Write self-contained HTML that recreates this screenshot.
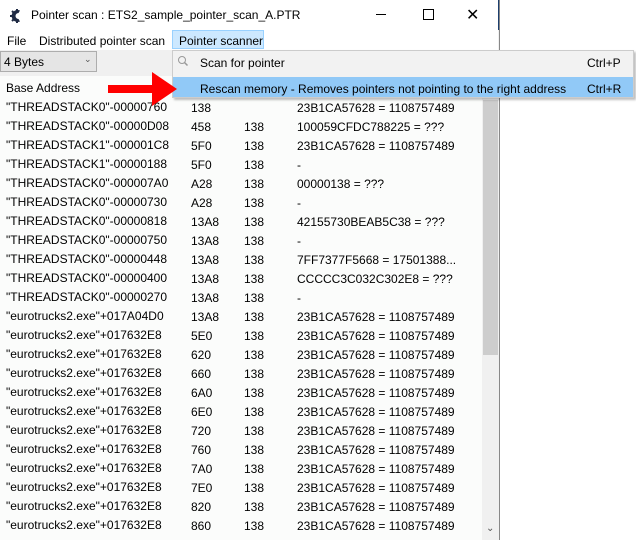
<html><head><style>
body{margin:0;width:636px;height:540px;background:#fff;font-family:"Liberation Sans",sans-serif;font-size:12px;color:#000;position:relative;overflow:hidden}
.a{position:absolute;white-space:nowrap}
.win{position:absolute;left:0;top:0;width:499px;height:540px;border-right:1px solid #888;background:#f0f0f0}
.title{position:absolute;left:0;top:0;width:498px;height:30px;background:#fff;border-right:1px solid #1c3f6e}
.row{position:absolute;left:6px;height:19px;line-height:19px}
</style></head><body>
<div class="win"></div>
<div class="title"></div>
<svg class="a" style="left:9px;top:8px" width="16" height="16" viewBox="0 0 16 16"><path d="M11 2.5A6 6 0 1 0 11 13.5L9.5 11A3 3 0 1 1 9.5 5z" fill="#1f2a44"/><path d="M3 3l2 2M1 8h3M3 13l2-2M8 1v3M8 12v3" stroke="#1f2a44" stroke-width="2"/></svg>
<div class="a" style="left:31px;top:8px;font-size:12px">Pointer scan : ETS2_sample_pointer_scan_A.PTR</div>
<div class="a" style="left:376px;top:14px;width:10px;height:1px;background:#000"></div>
<div class="a" style="left:423px;top:9px;width:9px;height:9px;border:1px solid #000"></div>
<div class="a" style="left:466px;top:5px;font-size:16px">✕</div>
<div class="a" style="left:0;top:30px;width:498px;height:20px;background:#fff"></div>
<div class="a" style="left:7px;top:34px">File</div>
<div class="a" style="left:39px;top:34px">Distributed pointer scan</div>
<div class="a" style="left:172px;top:30px;width:92px;height:19px;background:#cce8ff;border:1px solid #99d1ff;box-sizing:border-box"></div>
<div class="a" style="left:179px;top:34px">Pointer scanner</div>
<div class="a" style="left:0;top:51px;width:97px;height:21px;background:#e5e5e5;border:1px solid #adadad;box-sizing:border-box"></div>
<div class="a" style="left:4px;top:55px">4 Bytes</div>
<div class="a" style="left:84px;top:54px;font-size:9px;color:#555">⌄</div>
<div class="a" style="left:0;top:76px;width:482px;height:464px;background:#fbfcfb"></div>
<div class="a" style="left:482px;top:76px;width:16px;height:464px;background:#f0f0f0"></div>
<div class="a" style="left:483px;top:100px;width:15px;height:255px;background:#cdcdcd"></div>
<div class="a" style="left:486px;top:523px;font-size:10px;color:#555">⌄</div>
<div class="a" style="left:6px;top:81px">Base Address</div>
<div class="row a" style="top:98px">"THREADSTACK0"-00000760</div><div class="a" style="left:191px;top:101px">138</div><div class="a" style="left:297px;top:101px">23B1CA57628 = 1108757489</div>
<div class="row a" style="top:117px">"THREADSTACK0"-00000D08</div><div class="a" style="left:191px;top:120px">458</div><div class="a" style="left:244px;top:120px">138</div><div class="a" style="left:297px;top:120px">100059CFDC788225 = ???</div>
<div class="row a" style="top:136px">"THREADSTACK1"-000001C8</div><div class="a" style="left:191px;top:139px">5F0</div><div class="a" style="left:244px;top:139px">138</div><div class="a" style="left:297px;top:139px">23B1CA57628 = 1108757489</div>
<div class="row a" style="top:155px">"THREADSTACK1"-00000188</div><div class="a" style="left:191px;top:158px">5F0</div><div class="a" style="left:244px;top:158px">138</div><div class="a" style="left:297px;top:158px">-</div>
<div class="row a" style="top:174px">"THREADSTACK0"-000007A0</div><div class="a" style="left:191px;top:177px">A28</div><div class="a" style="left:244px;top:177px">138</div><div class="a" style="left:297px;top:177px">00000138 = ???</div>
<div class="row a" style="top:193px">"THREADSTACK0"-00000730</div><div class="a" style="left:191px;top:196px">A28</div><div class="a" style="left:244px;top:196px">138</div><div class="a" style="left:297px;top:196px">-</div>
<div class="row a" style="top:212px">"THREADSTACK0"-00000818</div><div class="a" style="left:191px;top:215px">13A8</div><div class="a" style="left:244px;top:215px">138</div><div class="a" style="left:297px;top:215px">42155730BEAB5C38 = ???</div>
<div class="row a" style="top:231px">"THREADSTACK0"-00000750</div><div class="a" style="left:191px;top:234px">13A8</div><div class="a" style="left:244px;top:234px">138</div><div class="a" style="left:297px;top:234px">-</div>
<div class="row a" style="top:250px">"THREADSTACK0"-00000448</div><div class="a" style="left:191px;top:253px">13A8</div><div class="a" style="left:244px;top:253px">138</div><div class="a" style="left:297px;top:253px">7FF7377F5668 = 17501388...</div>
<div class="row a" style="top:269px">"THREADSTACK0"-00000400</div><div class="a" style="left:191px;top:272px">13A8</div><div class="a" style="left:244px;top:272px">138</div><div class="a" style="left:297px;top:272px">CCCCC3C032C302E8 = ???</div>
<div class="row a" style="top:288px">"THREADSTACK0"-00000270</div><div class="a" style="left:191px;top:291px">13A8</div><div class="a" style="left:244px;top:291px">138</div><div class="a" style="left:297px;top:291px">-</div>
<div class="row a" style="top:307px">"eurotrucks2.exe"+017A04D0</div><div class="a" style="left:191px;top:310px">13A8</div><div class="a" style="left:244px;top:310px">138</div><div class="a" style="left:297px;top:310px">23B1CA57628 = 1108757489</div>
<div class="row a" style="top:326px">"eurotrucks2.exe"+017632E8</div><div class="a" style="left:191px;top:329px">5E0</div><div class="a" style="left:244px;top:329px">138</div><div class="a" style="left:297px;top:329px">23B1CA57628 = 1108757489</div>
<div class="row a" style="top:345px">"eurotrucks2.exe"+017632E8</div><div class="a" style="left:191px;top:348px">620</div><div class="a" style="left:244px;top:348px">138</div><div class="a" style="left:297px;top:348px">23B1CA57628 = 1108757489</div>
<div class="row a" style="top:364px">"eurotrucks2.exe"+017632E8</div><div class="a" style="left:191px;top:367px">660</div><div class="a" style="left:244px;top:367px">138</div><div class="a" style="left:297px;top:367px">23B1CA57628 = 1108757489</div>
<div class="row a" style="top:383px">"eurotrucks2.exe"+017632E8</div><div class="a" style="left:191px;top:386px">6A0</div><div class="a" style="left:244px;top:386px">138</div><div class="a" style="left:297px;top:386px">23B1CA57628 = 1108757489</div>
<div class="row a" style="top:402px">"eurotrucks2.exe"+017632E8</div><div class="a" style="left:191px;top:405px">6E0</div><div class="a" style="left:244px;top:405px">138</div><div class="a" style="left:297px;top:405px">23B1CA57628 = 1108757489</div>
<div class="row a" style="top:421px">"eurotrucks2.exe"+017632E8</div><div class="a" style="left:191px;top:424px">720</div><div class="a" style="left:244px;top:424px">138</div><div class="a" style="left:297px;top:424px">23B1CA57628 = 1108757489</div>
<div class="row a" style="top:440px">"eurotrucks2.exe"+017632E8</div><div class="a" style="left:191px;top:443px">760</div><div class="a" style="left:244px;top:443px">138</div><div class="a" style="left:297px;top:443px">23B1CA57628 = 1108757489</div>
<div class="row a" style="top:459px">"eurotrucks2.exe"+017632E8</div><div class="a" style="left:191px;top:462px">7A0</div><div class="a" style="left:244px;top:462px">138</div><div class="a" style="left:297px;top:462px">23B1CA57628 = 1108757489</div>
<div class="row a" style="top:478px">"eurotrucks2.exe"+017632E8</div><div class="a" style="left:191px;top:481px">7E0</div><div class="a" style="left:244px;top:481px">138</div><div class="a" style="left:297px;top:481px">23B1CA57628 = 1108757489</div>
<div class="row a" style="top:497px">"eurotrucks2.exe"+017632E8</div><div class="a" style="left:191px;top:500px">820</div><div class="a" style="left:244px;top:500px">138</div><div class="a" style="left:297px;top:500px">23B1CA57628 = 1108757489</div>
<div class="row a" style="top:516px">"eurotrucks2.exe"+017632E8</div><div class="a" style="left:191px;top:519px">860</div><div class="a" style="left:244px;top:519px">138</div><div class="a" style="left:297px;top:519px">23B1CA57628 = 1108757489</div>
<div class="a" style="left:172px;top:50px;width:462px;height:48px;background:#f2f2f2;border:1px solid #ccc;box-sizing:border-box;box-shadow:2px 2px 2px rgba(0,0,0,.25)"></div>
<svg class="a" style="left:177px;top:55px" width="12" height="12"><circle cx="5" cy="5" r="3.5" fill="none" stroke="#999"/><path d="M7.5 7.5l3 3" stroke="#999" stroke-width="1.5"/></svg>
<div class="a" style="left:200px;top:56px">Scan for pointer</div>
<div class="a" style="left:587px;top:56px">Ctrl+P</div>
<div class="a" style="left:173px;top:77px;width:460px;height:20px;background:#91c9f7"></div>
<div class="a" style="left:200px;top:82px">Rescan memory - Removes pointers not pointing to the right address</div>
<div class="a" style="left:587px;top:82px">Ctrl+R</div>
<svg class="a" style="left:105px;top:70px" width="72" height="38"><path d="M3 15h44V2l25 17-25 17V23H3z" fill="#f00"/></svg>
</body></html>
